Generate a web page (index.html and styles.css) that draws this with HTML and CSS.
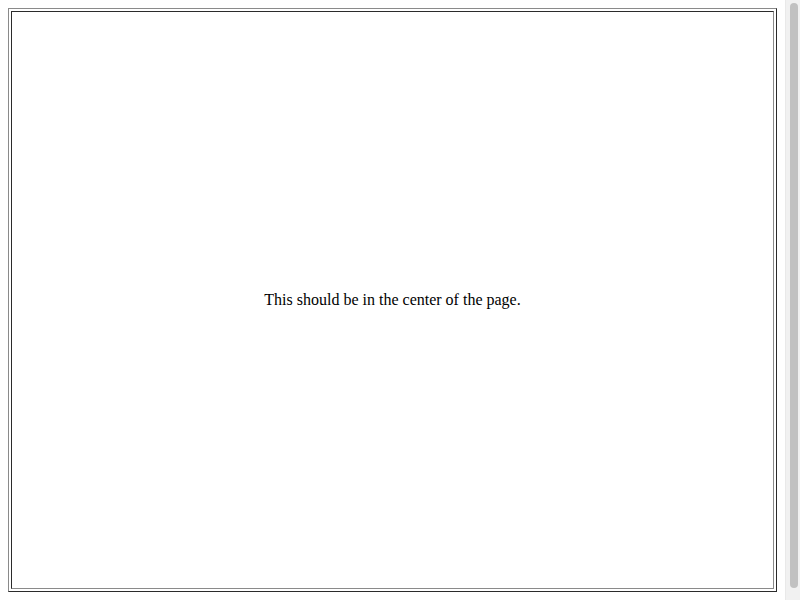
FILE: index.html
```html
<!DOCTYPE html>
<html>
<head>
<meta charset="utf-8">
<title>Center</title>
<link rel="stylesheet" href="styles.css">
</head>
<body>
<table class="frame">
<tr><td class="cell">This should be in the center of the page.</td></tr>
</table>
<div class="scrollbar"><div class="thumb"></div></div>
</body>
</html>
```
FILE: styles.css
```css
html, body {
  height: 100%;
}
html {
  overflow: hidden;
}
body {
  margin: 8px 23px 8px 8px;
  height: calc(100% - 16px);
  font-family: "Liberation Serif", "Times New Roman", serif;
  font-size: 16px;
  color: #000;
  background: #fff;
}
.frame {
  width: 100%;
  height: 100%;
  border-collapse: separate;
  border-spacing: 2px;
  border-style: solid;
  border-width: 1px;
  border-color: #8a8a8a #2b2b2b #2b2b2b #8a8a8a;
}
.cell {
  text-align: center;
  vertical-align: middle;
  padding: 1px;
  border-style: solid;
  border-width: 1px;
  border-color: #2b2b2b #8a8a8a #8a8a8a #2b2b2b;
}
.scrollbar {
  position: fixed;
  top: 0;
  right: 0;
  width: 14px;
  height: 100%;
  background: #f1f1f1;
  border-left: 1px solid #e9e9e9;
}
.thumb {
  position: absolute;
  top: 3px;
  left: 4px;
  width: 8px;
  height: 585px;
  border-radius: 4px;
  background: #c1c1c1;
}
```
